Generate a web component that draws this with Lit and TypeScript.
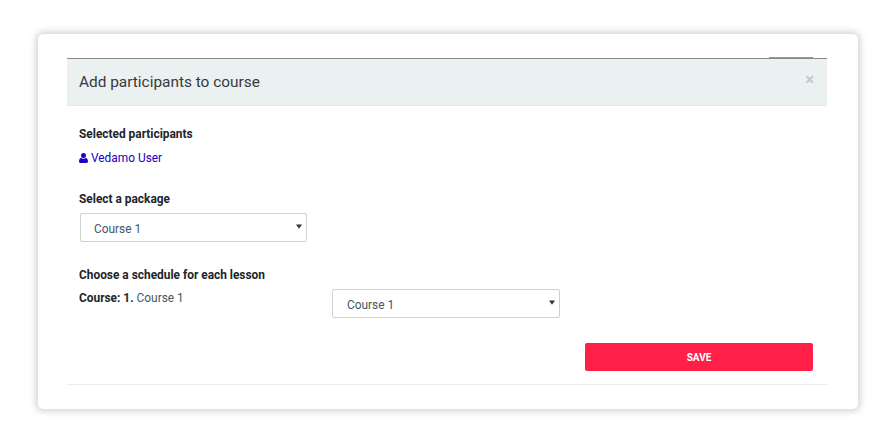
import { LitElement, html, css } from "lit";
import { customElement } from "lit/decorators.js";

const arrow = html`<svg class="arrow" width="6" height="5" viewBox="0 0 6 5"><path d="M0 .5h6L3 4.8z" fill="#2b3440"/></svg>`;

@customElement("app-root")
export class AppRoot extends LitElement {
  static styles = css`
    :host { display: block; width: 895px; height: 440px; box-sizing: border-box; padding: 34px 37px 0 38px; background: #fff; font-family: Roboto, "Liberation Sans", sans-serif; font-size: 11.9px; color: #212529; }
    .card { box-sizing: border-box; height: 375px; padding: 24px 31px 0 29px; background: #fff; border-radius: 5px; box-shadow: 0 0 7px 2px rgba(0,0,0,.19); display: flex; flex-direction: column; }
    .header { position: relative; box-sizing: border-box; height: 48px; background: #ebf0f0; border-top: 1px solid #888; border-bottom: 1px solid #e4e9e9; padding: 0 12px; display: flex; align-items: center; justify-content: space-between; }
    .header::before { content: ""; position: absolute; top: -2px; right: 14px; width: 44px; height: 1px; background: #8d97a4; }
    h1 { margin: 0; font-size: 15.4px; font-weight: 400; color: #343a40; }
    .close { font-size: 16px; font-weight: 700; color: #c4c8c8; line-height: 1; margin-top: -4px; margin-right: 1px; }
    .body { flex: 1; padding: 21px 14px 0 12px; display: flex; flex-direction: column; align-items: flex-start; }
    .label { font-weight: 700; line-height: 14px; color: #212529; }
    .user { display: flex; align-items: center; gap: 3px; margin-top: 10px; line-height: 14px; color: #2200c1; }
    .user svg { width: 9px; height: 10px; }
    .pkg { margin-top: 27px; }
    .sel { position: relative; box-sizing: border-box; display: block; height: 29px; }
    .sel select { appearance: none; -webkit-appearance: none; box-sizing: border-box; display: block; width: 100%; height: 100%; padding: 3px 0 0 13px; background: #fff; border: 1px solid #d0d0d0; border-radius: 2px; font: inherit; color: #3f5568; outline: none; }
    .arrow { position: absolute; right: 5px; top: 11px; }
    .w1 { width: 227px; margin: 7px 0 0 1px; }
    .sched { margin-top: 26px; }
    .row { display: flex; width: 100%; margin-top: 9px; }
    .course { width: 253px; line-height: 14px; color: #3f5568; }
    .course b { color: #212529; }
    .w2 { width: 228px; margin-top: -2px; }
    .w2 select { padding-left: 14px; }
    .actions { align-self: stretch; display: flex; justify-content: flex-end; margin-top: 25px; }
    .save { width: 228px; height: 28px; border: 0; border-radius: 2px; background: #ff1f47; color: #fff; font: 700 10px Roboto, "Liberation Sans", sans-serif; text-transform: uppercase; }
    .footer { border-top: 1px solid #e9ecef; height: 24px; }
  `;

  render() {
    return html`
      <div class="card">
        <div class="header"><h1>Add participants to course</h1><span class="close">×</span></div>
        <div class="body">
          <div class="label">Selected participants</div>
          <div class="user">
            <svg viewBox="0 0 9 10"><circle cx="4.5" cy="2.6" r="2.5" fill="#2200c1"/><path d="M0 8.6C0 6.4.8 5 2.2 4.9c.6.5 1.4.8 2.3.8s1.700-.3 2.300-.8C8.200 5 9 6.400 9 8.600 9 9.500 8.400 10 7.600 10H1.400C.6 10 0 9.500 0 8.600z" fill="#2200c1"/></svg>
            <span>Vedamo User</span>
          </div>
          <div class="label pkg">Select a package</div>
          <label class="sel w1"><select><option>Course 1</option></select>${arrow}</label>
          <div class="label sched">Choose a schedule for each lesson</div>
          <div class="row">
            <div class="course"><b>Course: 1.</b> Course 1</div>
            <label class="sel w2"><select><option>Course 1</option></select>${arrow}</label>
          </div>
          <div class="actions"><button class="save">Save</button></div>
        </div>
        <div class="footer"></div>
      </div>
    `;
  }
}
